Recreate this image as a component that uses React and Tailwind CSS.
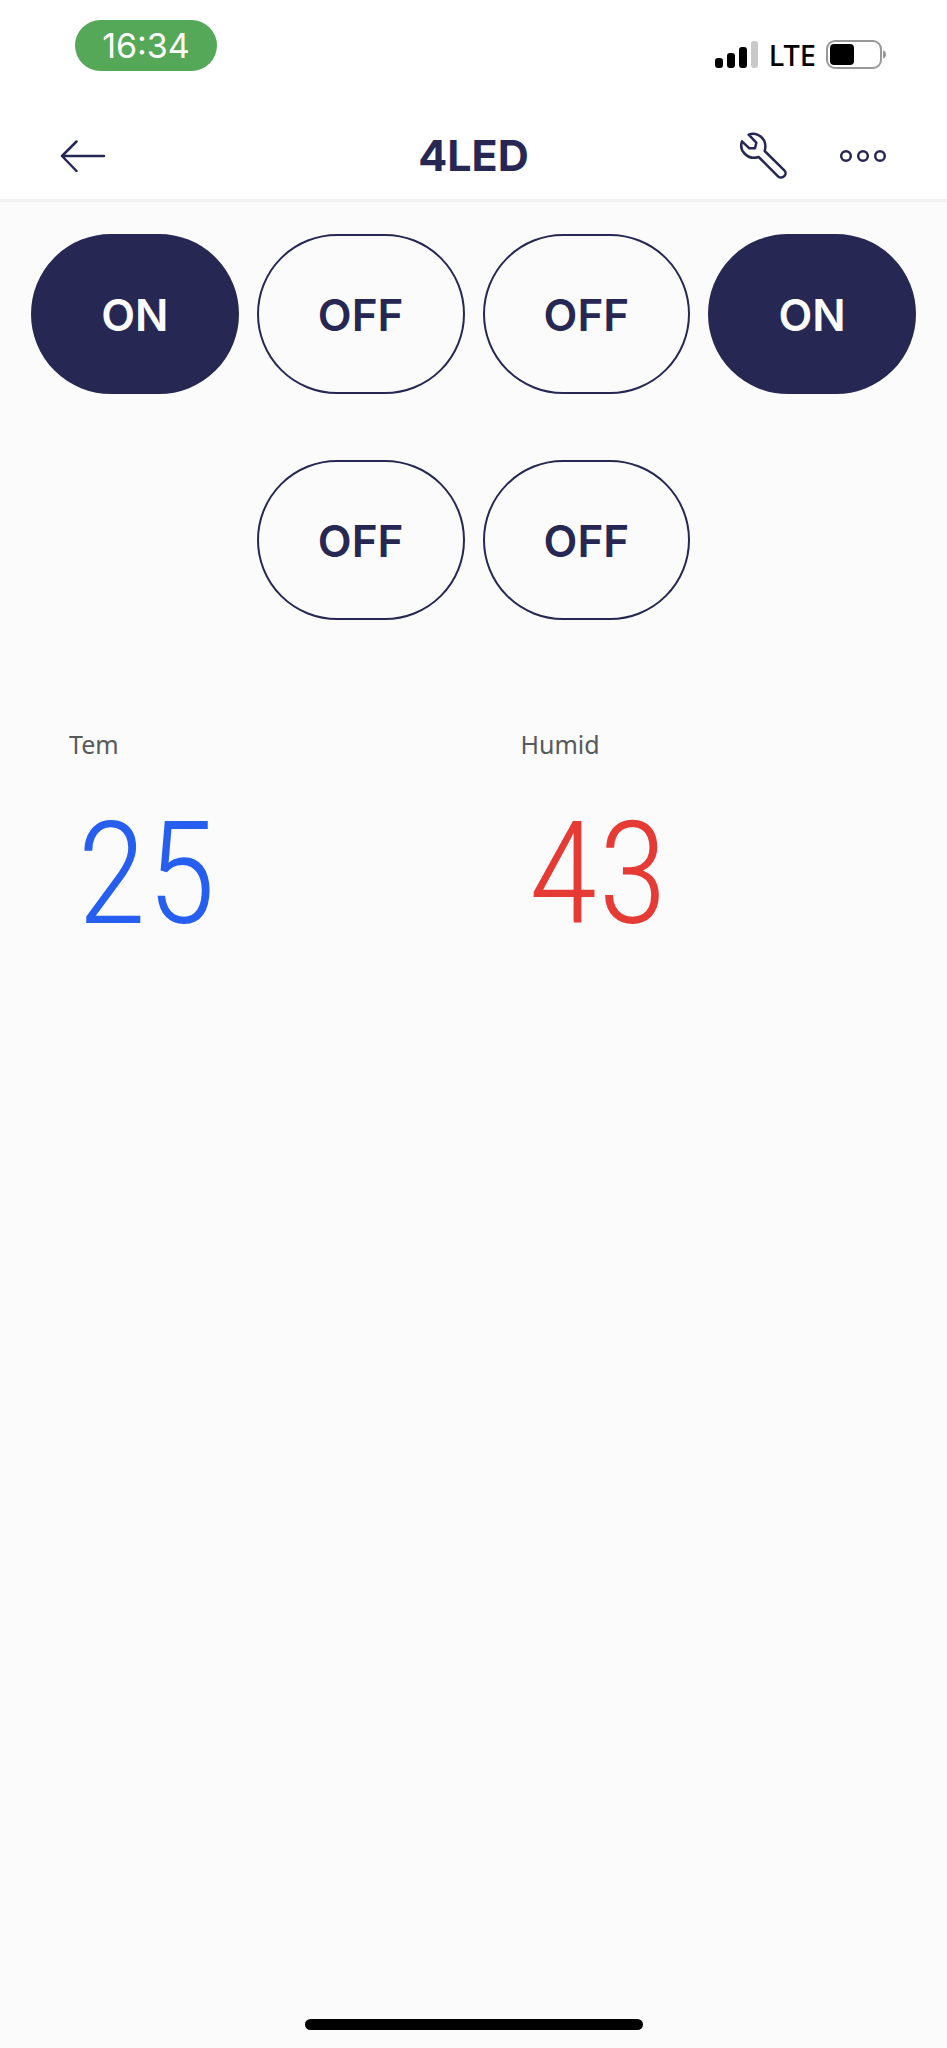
import { useState } from "react";

function SignalIcon() {
  return (
    <svg className="h-7 w-11" viewBox="0 0 44 28" aria-hidden="true">
      <rect x="0" y="17" width="8" height="10" rx="3" fill="#000" />
      <rect x="12" y="12" width="8" height="15" rx="3" fill="#000" />
      <rect x="24" y="6" width="8" height="21" rx="3" fill="#000" />
      <rect x="36" y="0" width="7" height="27" rx="3" fill="#c9c9c9" />
    </svg>
  );
}

function BatteryIcon() {
  return (
    <svg className="h-[30px] w-[62px]" viewBox="0 0 62 30" aria-hidden="true">
      <rect x="1" y="1" width="54" height="27" rx="8" fill="none" stroke="#989898" strokeWidth="2" />
      <rect x="4" y="4" width="24" height="21" rx="4" fill="#000" />
      <path d="M57 10.500C61 11 61 18 57 18.500Z" fill="#989898" />
    </svg>
  );
}

function BackIcon() {
  return (
    <svg className="h-8 w-[46px]" viewBox="0 0 46 32" fill="none" stroke="#262853" strokeWidth="2.500" strokeLinecap="round" strokeLinejoin="round" aria-hidden="true">
      <path d="M44 16H2M16.500 1.500 2 16l14.500 15" />
    </svg>
  );
}

function WrenchIcon() {
  return (
    <svg className="size-[50px]" viewBox="115 65 150 150" fill="none" stroke="#262853" strokeWidth="7.500" strokeLinecap="round" strokeLinejoin="round" aria-hidden="true">
      <path d="M147 76C166 69 186 78 194 95C198 105 198 115 195 125L254 183C259 188 259 195 254 200C249 206 240 206 235 201L177 143C162 148 147 145 136 134C125 123 122 109 127 96L149 117L166 117L170 100Z" />
    </svg>
  );
}

function MoreIcon() {
  return (
    <svg className="h-3.5 w-12" viewBox="0 0 48 14" fill="none" stroke="#262853" strokeWidth="2.500" aria-hidden="true">
      <circle cx="7" cy="7" r="4.800" />
      <circle cx="24" cy="7" r="4.800" />
      <circle cx="41" cy="7" r="4.800" />
    </svg>
  );
}

function Switch({ name, initial, className = "" }) {
  const [on, setOn] = useState(initial);
  const look = on ? "bg-[#262853] text-[#fbfbfb]" : "bg-transparent text-[#262853]";
  return (
    <button
      type="button"
      aria-label={`${name} ${on ? "ON" : "OFF"}`}
      aria-pressed={on}
      onClick={() => setOn(!on)}
      className={`flex h-40 items-center justify-center rounded-[80px] border-2 border-[#262853] pt-0.5 text-[44px] leading-none font-semibold ${look} ${className}`}
    >
      {on ? "ON" : "OFF"}
    </button>
  );
}

function Reading({ label, value, color }) {
  return (
    <div className="pl-[38px]">
      <dt className="font-['Noto_Sans',sans-serif] text-[25px] leading-9 text-[#58595b]">{label}</dt>
      <dd className={`mt-8 pl-2 font-['Noto_Sans_ExtraCondensed','Noto_Sans_ExtraCondensed_Light','Roboto_Condensed','Liberation_Sans_Narrow',sans-serif] text-[143px] leading-[160px] font-light ${color}`}>
        {value}
      </dd>
    </div>
  );
}

export default function App() {
  return (
    <div className="flex min-h-screen flex-col bg-[#fbfbfb] font-['Inter',sans-serif]">
      <header className="border-b-3 border-[#f1f1f1] bg-white">
        <div className="flex h-28 items-start justify-between pr-[59px] pl-[75px]">
          <div className="mt-5 flex h-[51px] w-[142px] items-center justify-center rounded-full bg-[#55a858] text-[34px] leading-none text-white">
            16:34
          </div>
          <div className="mt-[39px] flex items-center gap-2.5 font-['Noto_Sans',sans-serif] text-[29px] leading-8 font-medium text-black">
            <SignalIcon />
            LTE
            <BatteryIcon />
          </div>
        </div>
        <div className="grid h-[87px] grid-cols-3 items-center px-[60px]">
          <button type="button" aria-label="Back" className="justify-self-start">
            <BackIcon />
          </button>
          <h1 className="text-center text-[43px] leading-none font-bold text-[#262853]">4LED</h1>
          <div className="flex items-center gap-[51px] justify-self-end">
            <button type="button" aria-label="Settings">
              <WrenchIcon />
            </button>
            <button type="button" aria-label="More">
              <MoreIcon />
            </button>
          </div>
        </div>
      </header>

      <main className="flex-1 px-[31px] pt-8">
        <div className="grid grid-cols-4 gap-x-[18px] gap-y-[66px]">
          <Switch name="LED 1" initial={true} />
          <Switch name="LED 2" initial={false} />
          <Switch name="LED 3" initial={false} />
          <Switch name="LED 4" initial={true} />
          <Switch name="LED 5" initial={false} className="col-start-2" />
          <Switch name="LED 6" initial={false} />
        </div>
        <dl className="mt-[106px] grid grid-cols-2 gap-x-[18px]">
          <Reading label="Tem" value="25" color="text-[#265ef0]" />
          <Reading label="Humid" value="43" color="text-[#e63a35]" />
        </dl>
      </main>

      <footer className="flex justify-center pb-[18px]">
        <div className="h-[11px] w-[338px] rounded-full bg-black" />
      </footer>
    </div>
  );
}
